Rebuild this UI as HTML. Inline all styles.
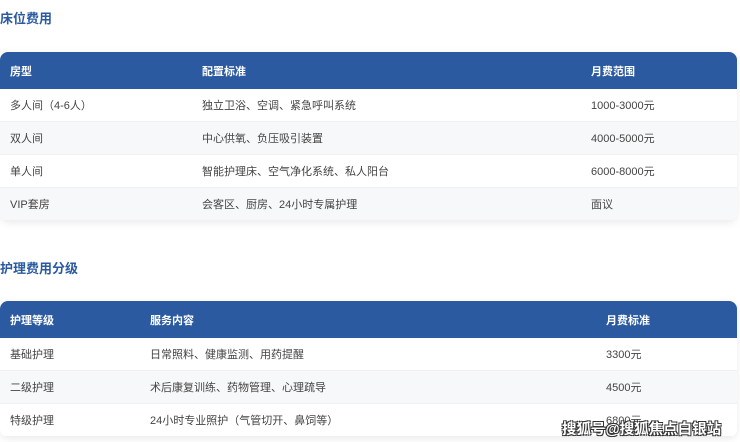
<!DOCTYPE html>
<html><head><meta charset="utf-8"><style>
body{margin:0;width:740px;height:442px;overflow:hidden;background:#fff;font-family:"Liberation Sans","Noto Sans CJK SC",sans-serif;position:relative}
h2{position:absolute;left:0;margin:0;font-size:13px;font-weight:bold;color:#2b5aa0}
.t{position:absolute;left:0;width:737px;border-radius:8px;overflow:hidden;box-shadow:0 2px 8px rgba(0,0,0,.08);background:#fff}
.r{height:33px;position:relative;font-size:11px;color:#444;border-bottom:1px solid #eef0f3;box-sizing:border-box}
.r.h{height:37px;background:#2b5aa0;color:#fff;font-weight:bold;border:0}
.r:nth-child(odd):not(.h){background:#f7f8fa}
.r span{position:absolute;top:50%;transform:translateY(-50%);white-space:nowrap}
.wm{position:absolute;left:562px;top:418px;font-size:14.5px;color:#fff;font-weight:bold;white-space:nowrap;text-shadow:-1px -1px 0 #333,1px -1px 0 #333,-1px 1px 0 #333,1px 1px 0 #333}
</style></head><body>
<h2 style="top:8px">床位费用</h2>
<div class="t" style="top:52px">
<div class="r h"><span style="left:10px">房型</span><span style="left:202px">配置标准</span><span style="left:591px">月费范围</span></div>
<div class="r"><span style="left:10px">多人间（4-6人）</span><span style="left:202px">独立卫浴、空调、紧急呼叫系统</span><span style="left:591px">1000-3000元</span></div>
<div class="r"><span style="left:10px">双人间</span><span style="left:202px">中心供氧、负压吸引装置</span><span style="left:591px">4000-5000元</span></div>
<div class="r"><span style="left:10px">单人间</span><span style="left:202px">智能护理床、空气净化系统、私人阳台</span><span style="left:591px">6000-8000元</span></div>
<div class="r"><span style="left:10px">VIP套房</span><span style="left:202px">会客区、厨房、24小时专属护理</span><span style="left:591px">面议</span></div>
</div>
<h2 style="top:258px">护理费用分级</h2>
<div class="t" style="top:301px">
<div class="r h"><span style="left:10px">护理等级</span><span style="left:150px">服务内容</span><span style="left:606px">月费标准</span></div>
<div class="r"><span style="left:10px">基础护理</span><span style="left:150px">日常照料、健康监测、用药提醒</span><span style="left:606px">3300元</span></div>
<div class="r"><span style="left:10px">二级护理</span><span style="left:150px">术后康复训练、药物管理、心理疏导</span><span style="left:606px">4500元</span></div>
<div class="r"><span style="left:10px">特级护理</span><span style="left:150px">24小时专业照护（气管切开、鼻饲等）</span><span style="left:606px">6800元</span></div>
</div>
<div class="wm">搜狐号@搜狐焦点白银站</div>
</body></html>
